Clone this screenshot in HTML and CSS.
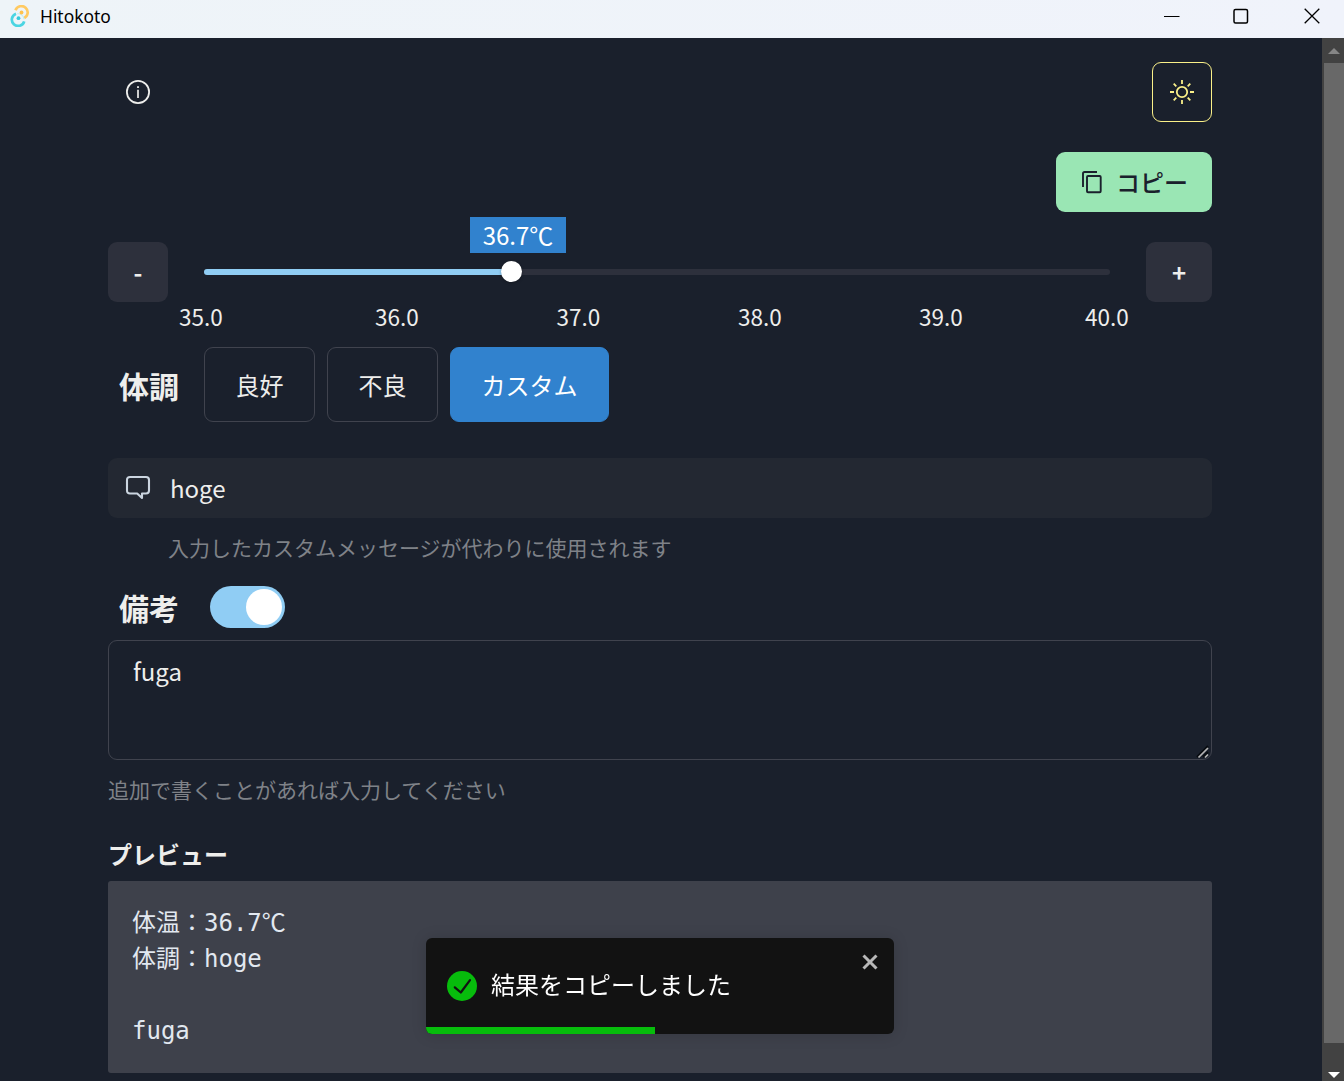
FILE: index.html
```html
<!DOCTYPE html>
<html lang="ja">
<head>
<meta charset="utf-8">
<title>Hitokoto</title>
<link rel="stylesheet" href="styles.css">
</head>
<body>
<header class="titlebar">
  <svg class="app-icon" width="20" height="22" viewBox="0 0 20 22" fill="none">
    <path d="M5.5 5.2A6.3 6.3 0 1 1 14.3 13" stroke="#ffca62" stroke-width="2.7"/>
    <path d="M14.2 16.3A6.3 6.3 0 1 1 6 8.7" stroke="#4bd5e2" stroke-width="2.7"/>
    <path d="M7.3 8.7c3.6-.3 6.3 2.1 6.7 5.5" stroke="#b9edf1" stroke-width="1"/>
    <circle cx="11.5" cy="7.5" r="1.9" fill="#ffc24d"/>
    <circle cx="8.5" cy="13.2" r="1.9" fill="#35cbdc"/>
  </svg>
  <span class="app-name">Hitokoto</span>
  <div class="window-controls">
    <svg width="16" height="16" viewBox="0 0 16 16"><path d="M0 8.5h15.5" stroke="#000"/></svg>
    <svg width="16" height="16" viewBox="0 0 16 16"><rect x="1" y="1.5" width="13.5" height="13.5" rx="1.5" fill="none" stroke="#000" stroke-width="1.5"/></svg>
    <svg width="16" height="16" viewBox="0 0 16 16"><path d="M.7.7l14.6 14.6M15.3.7L.7 15.3" stroke="#000" stroke-width="1.3"/></svg>
  </div>
</header>
<div class="viewport">
  <main class="content">
    <div class="toolbar">
      <button class="icon-button" aria-label="info">
        <svg width="24" height="24" viewBox="0 0 24 24"><circle cx="12" cy="12" r="11.1" fill="none" stroke="#eeeeec" stroke-width="1.8"/><path d="M12 9.8v8.2" stroke="#eeeeec" stroke-width="1.7"/><rect x="11.1" y="6.2" width="1.8" height="1.8" fill="#eeeeec"/></svg>
      </button>
      <button class="icon-button theme-button" aria-label="theme">
        <svg width="24" height="24" viewBox="0 0 24 24" fill="none" stroke="#faf089" stroke-width="1.8"><circle cx="12" cy="12" r="5.2"/><path d="M12 0v4M12 20v4M0 12h4M20 12h4M3.7 3.7l2.6 2.6M17.7 17.7l2.6 2.6M3.7 20.3l2.6-2.6M17.7 6.3l2.6-2.6"/></svg>
      </button>
    </div>
    <div class="copy-row">
      <button class="copy-button">
        <svg width="24" height="24" viewBox="0 0 24 24" fill="none" stroke="#1a202c" stroke-width="1.9"><path d="M3 17V3.6Q3 2 4.6 2H17"/><rect x="7" y="6" width="13.7" height="16.3" rx="1"/></svg>
        <span>コピー</span>
      </button>
    </div>
    <div class="temperature">
      <button class="step-button">-</button>
      <div class="slider">
        <div class="slider-fill"></div>
        <div class="slider-thumb"></div>
        <div class="slider-value">36.7℃</div>
      </div>
      <button class="step-button step-plus">+</button>
    </div>
    <div class="marks"><span>35.0</span><span>36.0</span><span>37.0</span><span>38.0</span><span>39.0</span><span>40.0</span></div>
    <div class="condition">
      <h2 class="label">体調</h2>
      <button class="choice">良好</button>
      <button class="choice">不良</button>
      <button class="choice choice-active">カスタム</button>
    </div>
    <div class="message">
      <svg width="26" height="26" viewBox="0 0 26 26" fill="none" stroke="#cbd5e0" stroke-width="2.1"><path d="M5 2h16q3 0 3 3v10.500q0 3-3 3h-4v4.500l-4.800-4.500H5q-3 0-3-3V5q0-3 3-3z" stroke-linejoin="round"/></svg>
      <span>hoge</span>
    </div>
    <p class="hint message-hint">入力したカスタムメッセージが代わりに使用されます</p>
    <div class="remarks">
      <h2 class="label">備考</h2>
      <div class="switch"><div class="switch-thumb"></div></div>
    </div>
    <div class="note">
      <textarea class="note-input">fuga</textarea>
      <svg class="resize-grip" width="14" height="14" viewBox="0 0 14 14"><path d="M1 12L12 1M7 12l5-5" stroke="#080b10" stroke-width="2"/><path d="M2.500 12.500L12 3M9 12.500L12 9.500" stroke="#b5b5b5" stroke-width="1.700"/></svg>
    </div>
    <p class="hint note-hint">追加で書くことがあれば入力してください</p>
    <h3 class="preview-title">プレビュー</h3>
<pre class="preview">体温：36.7℃
体調：hoge

fuga</pre>
  </main>
  <div class="scrollbar">
    <svg class="scroll-arrow" width="12" height="6" viewBox="0 0 12 6"><path d="M0 6l6-6 6 6z" fill="#868686"/></svg>
    <div class="scroll-thumb"></div>
    <svg class="scroll-arrow" width="12" height="6" viewBox="0 0 12 6"><path d="M0 0l6 6 6-6z" fill="#fff"/></svg>
  </div>
</div>
<div class="toast">
  <svg class="toast-check" width="30" height="30" viewBox="0 0 30 30"><circle cx="15" cy="15" r="15" fill="#07bc0c"/><path d="M7.800 16.300l6 5.200 9.200-12.300" fill="none" stroke="#121212" stroke-width="2.200" stroke-linecap="round" stroke-linejoin="round"/></svg>
  <span class="toast-text">結果をコピーしました</span>
  <svg class="toast-close" width="16" height="16" viewBox="0 0 16 16"><path d="M1.500 1.500l13 13M14.500 1.500l-13 13" stroke="#b8b8b8" stroke-width="3"/></svg>
  <div class="toast-progress"></div>
</div>
</body>
</html>
```
FILE: styles.css
```css
* { box-sizing: border-box; }
body {
  margin: 0;
  height: 1081px;
  overflow: hidden;
  background: #1a202c;
  color: #eeeeec;
  font: 24px/36px "Noto Sans CJK JP", sans-serif;
}
button { padding: 0; border: 0; background: none; color: inherit; font: inherit; }
h2, h3, p, pre { margin: 0; }
svg { display: block; flex: none; }

.titlebar {
  display: flex;
  align-items: center;
  height: 38px;
  padding: 0 24px 6px 10px;
  background: linear-gradient(90deg, #eef4f8, #f0f3fb);
  color: #000;
}
.app-icon { margin-right: 10px; }
.app-name { font: 17.4px/24px "Noto Sans", sans-serif; }
.window-controls { display: flex; gap: 53px; margin-left: auto; }
.window-controls svg:last-child { margin-left: 2px; }

.viewport { display: flex; height: 1043px; }
.content { width: 1104px; margin-left: 108px; padding-top: 24px; }

.toolbar { display: flex; justify-content: space-between; }
.icon-button { display: grid; place-items: center; width: 60px; height: 60px; border-radius: 9px; }
.theme-button { border: 1px solid #faf089; }
.copy-row { display: flex; justify-content: flex-end; margin-top: 30px; }
.copy-button {
  display: flex;
  align-items: center;
  gap: 12px;
  width: 156px;
  height: 60px;
  padding-left: 24px;
  border-radius: 9px;
  background: #9ae6b4;
  color: #1a202c;
  font-weight: 500;
}

.temperature { display: flex; align-items: center; margin-top: 30px; }
.step-button {
  width: 60px;
  height: 60px;
  border-radius: 9px;
  background: #2d303c;
  font-weight: 700;
}
.step-plus { width: 66px; }
.slider { position: relative; width: 906px; height: 6px; margin: 0 36px; border-radius: 3px; background: #2d303c; }
.slider-fill { width: 308px; height: 6px; border-radius: 3px 0 0 3px; background: #90cdf4; }
.slider-thumb {
  position: absolute;
  top: -8px;
  left: 297px;
  width: 21px;
  height: 21px;
  border-radius: 50%;
  background: #fff;
  box-shadow: 0 1px 3px rgba(0, 0, 0, .3);
}
.slider-value {
  position: absolute;
  top: -52px;
  left: 266px;
  width: 96px;
  height: 36px;
  background: #3182ce;
  color: #fff;
  text-align: center;
  white-space: nowrap;
}
.marks {
  display: grid;
  grid-template-columns: 196px 181.5px 181.5px 181px 166px auto;
  height: 45px;
  padding-left: 71px;
  font-size: 22.5px;
  line-height: 29px;
}

.condition { display: flex; align-items: center; gap: 12px; }
.label { width: 84px; padding-left: 11px; font-size: 30px; line-height: 42px; font-weight: 700; }
.choice { width: 111px; height: 75px; border: 1px solid #40434e; border-radius: 9px; }
.choice-active { width: 159px; border-color: #3182ce; background: #3182ce; color: #fff; }

.message {
  display: flex;
  align-items: center;
  gap: 19px;
  height: 60px;
  margin-top: 36px;
  padding-left: 17px;
  border-radius: 9px;
  background: #232832;
}
.hint { color: #7f8288; font-size: 21px; line-height: 30px; }
.message-hint { margin-top: 14px; padding-left: 60px; }
.remarks { display: flex; align-items: center; gap: 18px; margin-top: 24px; }
.switch { display: flex; justify-content: flex-end; width: 75px; height: 42px; padding: 3px; border-radius: 21px; background: #90cdf4; }
.switch-thumb { width: 36px; height: 36px; border-radius: 50%; background: #fff; }

.note { position: relative; height: 120px; margin-top: 12px; }
.note-input {
  display: block;
  width: 100%;
  height: 120px;
  padding: 12px 24px;
  border: 1px solid #40434e;
  border-radius: 9px;
  background: transparent;
  color: inherit;
  font: inherit;
  resize: none;
}
.resize-grip { position: absolute; right: 2px; bottom: 1px; }
.note-hint { margin-top: 14px; }
.preview-title { margin-top: 31px; font-size: 24px; line-height: 38px; font-weight: 700; }
.preview {
  height: 192px;
  margin-top: 8px;
  padding: 24px;
  border-radius: 3px;
  background: #3e414b;
  color: #e2e8f0;
  font: 24px/36px "DejaVu Sans Mono", "Noto Sans CJK JP", monospace;
}

.scrollbar { display: flex; flex-direction: column; align-items: center; width: 22px; margin-left: auto; padding: 10px 0 3px 2px; background: #424242; }
.scroll-thumb { width: 20px; height: 980px; margin-top: 9px; margin-bottom: auto; background: #686868; }

.toast {
  position: fixed;
  left: 426px;
  top: 938px;
  display: flex;
  align-items: center;
  width: 468px;
  height: 96px;
  padding: 0 16px 0 21px;
  overflow: hidden;
  border-radius: 6px;
  background: #121212;
  color: #fff;
  box-shadow: 0 1px 15px rgba(0, 0, 0, .15);
}
.toast-text { margin: -4px auto 0 14px; }
.toast-close { align-self: flex-start; margin-top: 16px; }
.toast-progress { position: absolute; left: 0; bottom: 0; width: 229px; height: 7px; background: #07bc0c; }
```
